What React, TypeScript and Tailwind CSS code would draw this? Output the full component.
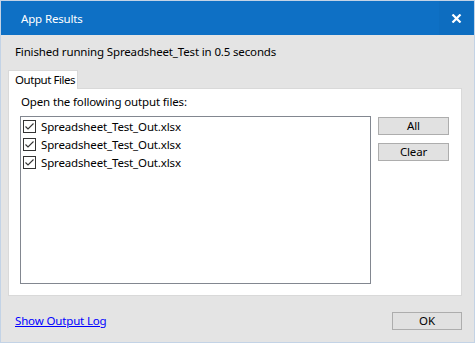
export default function App() {
  const files = ['Spreadsheet_Test_Out.xlsx', 'Spreadsheet_Test_Out.xlsx', 'Spreadsheet_Test_Out.xlsx']

  return (
    <div className="w-[475px] h-[343px] flex flex-col bg-[#e4e4e4] border border-[#c3d3e6] text-[11.5px] tracking-[-0.15px] text-black font-['Noto_Sans',_'Liberation_Sans',_sans-serif]">
      {/* title bar */}
      <div className="h-[34px] flex items-center justify-between bg-[#0e70c5]">
        <span className="pl-[20px] pt-[2px] text-white">App Results</span>
        <button className="w-[34px] h-full flex items-center justify-center bg-[#0d6dc0] mr-px">
          <svg width="11" height="9" viewBox="0 0 11 9">
            <path d="M1.5 0.5 L9.5 8.5 M9.5 0.5 L1.5 8.5" stroke="white" strokeWidth="2.2" />
          </svg>
        </button>
      </div>

      <div className="flex-1 flex flex-col px-[7px]">
        <p className="pt-[9px] pl-[7px] leading-[16px] whitespace-nowrap">Finished running Spreadsheet_Test in 0.5 seconds</p>

        {/* tab */}
        <div className="mt-[10px] flex">
          <div className="relative z-10 -mb-px h-[19px] w-[70px] bg-white border border-b-0 border-[#d9d9d9] flex items-center pl-[6px] leading-[16px] tracking-[-0.45px] whitespace-nowrap">
            Output Files
          </div>
        </div>

        {/* tab panel */}
        <div className="w-[454px] h-[208px] bg-white border border-[#d9d9d9] pt-[5px]">
          <p className="pl-[12px] leading-[16px] whitespace-nowrap">Open the following output files:</p>
          <div className="mt-[6px] pl-[11px] flex gap-[7px]">
            <div className="w-[351px] h-[168px] border border-[#828790] pt-[3px] pl-[2px]">
              {files.map((f, i) => (
                <div key={i} className="h-[18px] flex items-start gap-[5px]">
                  <svg width="13" height="13" viewBox="0 0 13 13" className="shrink-0">
                    <rect x="0.5" y="0.5" width="12" height="12" fill="white" stroke="#333333" />
                    <path d="M2.5 6.5 L5 9 L10.5 3.5" fill="none" stroke="#333333" strokeWidth="1.1" />
                  </svg>
                  <span className="leading-[14px] whitespace-nowrap">{f}</span>
                </div>
              ))}
            </div>
            <div className="flex flex-col gap-[8px] pt-px">
              <button className="w-[71px] h-[18px] bg-[#e1e1e1] border border-[#adadad] leading-[16px]">All</button>
              <button className="w-[71px] h-[18px] bg-[#e1e1e1] border border-[#adadad] leading-[16px]">Clear</button>
            </div>
          </div>
        </div>

        {/* footer */}
        <div className="mt-[16px] flex items-center justify-between pl-[7px] pr-[5px]">
          <a href="#" className="text-[#0000ff] underline leading-[16px] whitespace-nowrap">Show Output Log</a>
          <button className="w-[70px] h-[18px] bg-[#e1e1e1] border border-[#adadad] leading-[16px]">OK</button>
        </div>
      </div>
    </div>
  )
}
